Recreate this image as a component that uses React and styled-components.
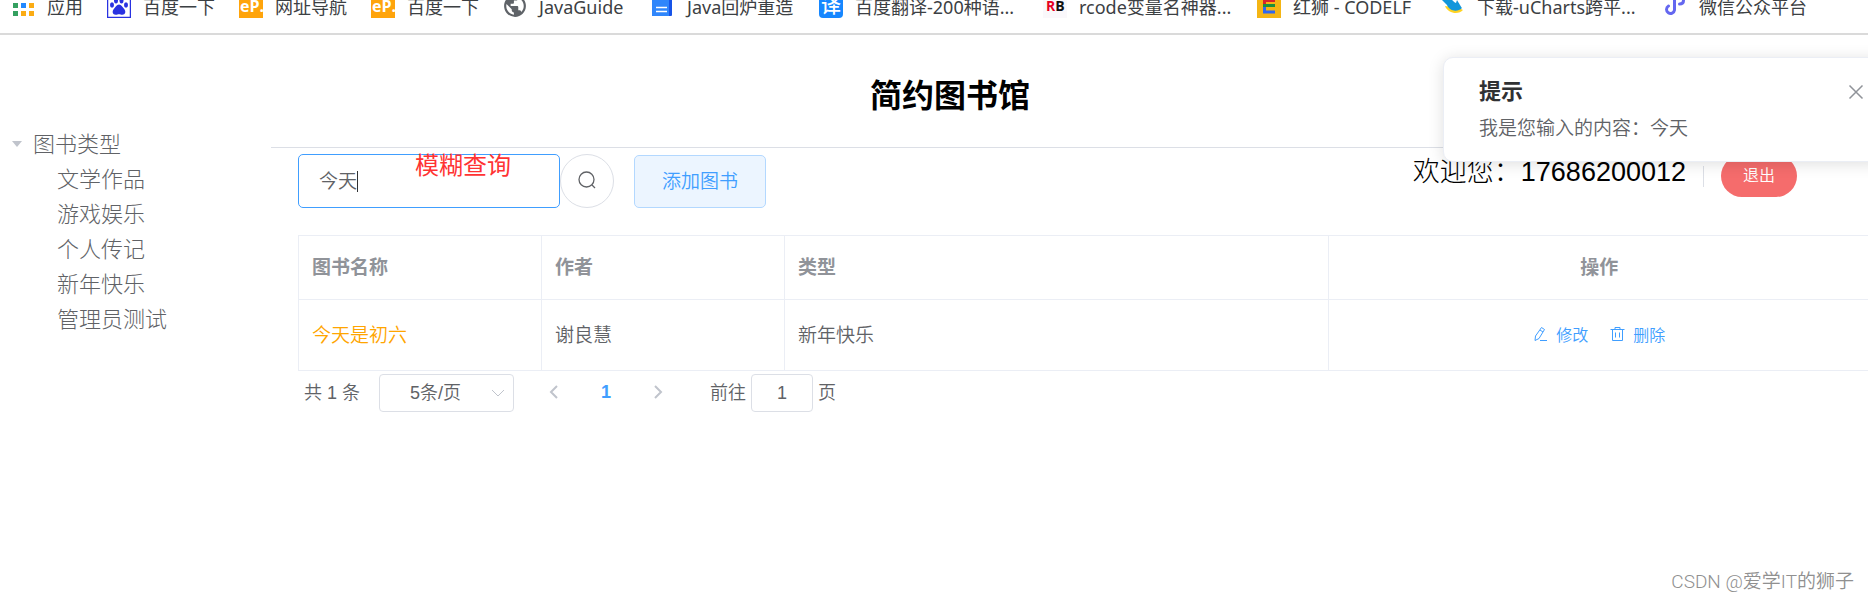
import React, { useState } from 'react';
import styled, { createGlobalStyle } from 'styled-components';

const GlobalStyle = createGlobalStyle`
  * {
    box-sizing: border-box;
  }

  body {
    margin: 0;
    overflow: hidden;
    background: #fff;
    color: #606266;
    font-family: "Liberation Sans", "Noto Sans CJK SC", sans-serif;
    font-weight: 350;
  }

  button, input, select {
    font-family: inherit;
    font-weight: inherit;
  }
`;

const Screen = styled.div`
  position: relative;
  min-height: 100vh;
  overflow: hidden;
`;

const BookmarkBar = styled.nav`
  height: 35px;
  overflow: hidden;
  border-bottom: 2px solid #dadada;
`;

const BookmarkList = styled.ul`
  display: flex;
  gap: 24px;
  margin: -6px 0 0;
  padding: 0 0 0 11px;
  list-style: none;
`;

const Bookmark = styled.a`
  display: flex;
  align-items: center;
  gap: 12px;
  height: 24px;
  color: #3c4043;
  font-family: "Noto Sans", "Noto Sans CJK SC", sans-serif;
  font-size: 18px;
  font-weight: 400;
  line-height: 24px;
  white-space: nowrap;
  text-decoration: none;

  svg {
    flex: none;
  }
`;

const BookmarkLabel = styled.span`
  min-width: ${props => props.$width}px;
  padding-top: 2px;
`;

// The page is a little wider than the window, so its right edge is cut off
const Page = styled.div`
  width: calc(100% + 32px);
`;

const PageTitle = styled.h1`
  margin: 0;
  padding-top: 37px;
  color: #000;
  font-size: 32px;
  font-weight: 700;
  line-height: 48px;
  text-align: center;
`;

const Body = styled.div`
  display: flex;
`;

const Sidebar = styled.aside`
  flex: none;
  width: 271px;
  padding: 4px 0 0 12px;
`;

const TreeList = styled.ul`
  margin: 0;
  padding: 0 0 0 ${props => (props.$nested ? '45px' : '0')};
  list-style: none;
`;

const TreeNode = styled.div`
  display: flex;
  align-items: center;
  gap: 11px;
  height: 35px;
  font-size: 22px;
  font-weight: 300;
`;

const Caret = styled.span`
  margin-top: 4px;
  border: 5px solid transparent;
  border-top: 6px solid #c0c4cc;
  border-bottom: 0;
`;

const Main = styled.main`
  flex: 1;
  margin-top: 27px;
  padding: 6px 28px 0 27px;
  border-top: 1px solid #dcdfe6;
`;

const Toolbar = styled.div`
  display: flex;
  align-items: flex-start;
  margin-bottom: 27px;
`;

const SearchBox = styled.label`
  position: relative;
  width: 262px;
`;

const SearchInput = styled.input`
  display: block;
  width: 100%;
  height: 54px;
  padding: 0 20px 4px;
  border: 1px solid #409eff;
  border-radius: 5px;
  outline: none;
  color: #606266;
  font-size: 19px;
`;

const TextCursor = styled.span`
  position: absolute;
  top: 17px;
  left: 59px;
  width: 1px;
  height: 21px;
  background: #303133;
`;

const Annotation = styled.span`
  position: absolute;
  top: -2px;
  left: 117px;
  color: #ff3333;
  font-size: 24px;
  font-weight: 400;
  line-height: 28px;
`;

const CircleButton = styled.button`
  display: grid;
  place-items: center;
  width: 54px;
  height: 54px;
  padding: 0 0 3px;
  border: 1px solid #dcdfe6;
  border-radius: 50%;
  background: #fff;
  color: #606266;
`;

const AddButton = styled.button`
  width: 132px;
  height: 53px;
  margin: 1px 0 0 20px;
  padding: 0 0 5px;
  border: 1px solid #b3d8ff;
  border-radius: 5px;
  background: #ecf5ff;
  color: #409eff;
  font-size: 19px;
`;

const UserArea = styled.div`
  display: flex;
  align-items: center;
  margin: 1px 75px 0 auto;
  color: #000;
`;

const Welcome = styled.span`
  padding-bottom: 8px;
  font-size: 27px;
  font-weight: 300;
  line-height: 32px;
`;

const Divider = styled.span`
  width: 1px;
  height: 21px;
  margin: 0 17px;
  background: #dcdfe6;
`;

const LogoutButton = styled.button`
  width: 76px;
  height: 42px;
  padding: 0 0 4px;
  border: 0;
  border-radius: 21px;
  background: #f56c6c;
  color: #fff;
  font-size: 16px;
`;

const BookTable = styled.table`
  width: 100%;
  table-layout: fixed;
  border-collapse: collapse;
  font-size: 19px;

  th, td {
    padding: 0 14px 4px 13px;
    border: 1px solid #ebeef5;
    text-align: left;
  }

  th {
    height: 64px;
    color: #909399;
    font-weight: 700;
  }

  td {
    height: 71px;
  }

  th:last-child, td:last-child {
    text-align: center;
  }
`;

const Col = styled.col`
  width: ${props => (props.$narrow ? '243px' : 'auto')};
`;

const BookLink = styled.a`
  color: #ffa500;
  text-decoration: none;
`;

const Actions = styled.div`
  display: flex;
  justify-content: center;
  gap: 22px;
  padding-top: 2px;
`;

const TextButton = styled.button`
  display: flex;
  align-items: center;
  gap: 8px;
  padding: 0;
  border: 0;
  background: none;
  color: #409eff;
  font-size: 16px;
`;

const Pagination = styled.div`
  display: flex;
  align-items: center;
  height: 38px;
  margin-top: 3px;
  padding-left: 6px;
  font-size: 18px;
`;

const PageText = styled.span`
  padding-bottom: 4px;
`;

const SizePicker = styled.div`
  position: relative;
  width: 135px;
  margin: 0 22px 0 19px;

  svg {
    position: absolute;
    top: 12px;
    right: 9px;
    pointer-events: none;
  }
`;

const SizeSelect = styled.select`
  appearance: none;
  width: 100%;
  height: 38px;
  padding: 0 30px;
  border: 1px solid #dcdfe6;
  border-radius: 4px;
  background: #fff;
  color: #606266;
  font-size: 18px;
`;

const PageButton = styled.button`
  display: grid;
  place-items: center;
  width: 36px;
  height: 38px;
  padding: 0 0 2px;
  border: 0;
  background: none;
  color: ${props => (props.$current ? '#409eff' : '#c0c4cc')};
  font-size: 18px;
  font-weight: 700;
`;

const Pager = styled.div`
  display: flex;
  gap: 16px;
`;

const Jumper = styled.label`
  display: flex;
  align-items: center;
  gap: 5px;
  margin-left: 34px;
`;

const JumperInput = styled.input`
  width: 62px;
  height: 38px;
  padding: 0;
  border: 1px solid #dcdfe6;
  border-radius: 4px;
  color: #606266;
  font-size: 18px;
  text-align: center;
`;

const Notification = styled.div`
  position: absolute;
  top: 57px;
  right: -16px;
  width: 441px;
  padding: 20px 35px 18px;
  border: 1px solid #ebeef5;
  border-radius: 10px;
  background: #fff;
  box-shadow: 0 2px 16px rgba(0, 0, 0, 0.13);
`;

const NotificationTitle = styled.h2`
  margin: 0;
  color: #303133;
  font-size: 22px;
  font-weight: 700;
  line-height: 28px;
`;

const NotificationText = styled.p`
  margin: 9px 0 0;
  font-size: 19px;
  line-height: 28px;
`;

const CloseButton = styled.button`
  position: absolute;
  top: 26px;
  right: 19px;
  display: flex;
  padding: 0;
  border: 0;
  background: none;
`;

const Watermark = styled.div`
  position: absolute;
  right: 14px;
  bottom: 5px;
  color: #909090;
  font-family: Roboto, "Noto Sans CJK SC", sans-serif;
  font-size: 19px;
  line-height: 28px;
`;

const AppsIcon = () => (
  <svg width="24" height="24" viewBox="0 0 24 24">
    {['#ea4335', '#ea4335', '#ea4335', '#34a060', '#2288ff', '#fbac14', '#34a060', '#fbac14', '#fbac14'].map((color, i) => (
      <rect key={i} x={2 + (i % 3) * 8} y={1 + Math.floor(i / 3) * 8} width="5" height="5" fill={color} />
    ))}
  </svg>
);

const PawIcon = () => (
  <svg width="24" height="24" viewBox="0 0 24 24">
    <rect x="0.500" y="0.500" width="23" height="23" fill="#fff" stroke="#2932e1" strokeWidth="1.500" />
    <g fill="#2932e1">
      <ellipse cx="9" cy="6.500" rx="2" ry="3" />
      <ellipse cx="14.500" cy="6.500" rx="2" ry="3" />
      <ellipse cx="5" cy="11" rx="2" ry="2.700" />
      <ellipse cx="19" cy="11" rx="2" ry="2.700" />
      <path d="M12 10.500c2.500 0 3.200 2.300 5 4.200 2.300 2.400 1.500 6-1.700 6-1.500 0-2-.5-3.300-.5s-1.800.5-3.300.5c-3.200 0-4-3.600-1.700-6 1.800-1.900 2.500-4.200 5-4.200z" />
    </g>
  </svg>
);

const EpIcon = () => (
  <svg width="24" height="24" viewBox="0 0 24 24">
    <rect width="24" height="24" fill="#ffa40b" />
    <text x="1" y="18" fill="#fff" fontFamily="Open Sans" fontSize="16" fontWeight="700">eP.</text>
  </svg>
);

const GlobeIcon = () => (
  <svg width="24" height="24" viewBox="1 1 22 22" fill="#5f6368">
    <path d="M12 2C6.480 2 2 6.480 2 12s4.480 10 10 10 10-4.480 10-10S17.520 2 12 2zm-1 17.930c-3.950-.490-7-3.850-7-7.930 0-.620.080-1.210.210-1.790L9 15v1c0 1.100.900 2 2 2v1.930zm6.900-2.540c-.260-.810-1-1.390-1.900-1.390h-1v-3c0-.550-.450-1-1-1H8v-2h2c.550 0 1-.450 1-1V7h2c1.100 0 2-.900 2-2v-.410c2.930 1.190 5 4.060 5 7.410 0 2.080-.800 3.970-2.100 5.390z" />
  </svg>
);

const DocIcon = () => (
  <svg width="24" height="24" viewBox="0 0 24 24">
    <rect x="1" y="2" width="20" height="20" rx="1" fill="#1754e8" />
    <rect x="1" y="2" width="17" height="20" fill="#2f86fb" />
    <path d="M5 13.500h11M5 17.500h11" stroke="#fff" strokeWidth="1.500" />
  </svg>
);

const TranslateIcon = () => (
  <svg width="24" height="24" viewBox="0 0 24 24">
    <rect width="24" height="24" rx="4" fill="#1687ff" />
    <text x="2" y="19" fill="#fff" fontFamily="Noto Sans CJK SC" fontSize="20" fontWeight="500">译</text>
  </svg>
);

const RbIcon = () => (
  <svg width="24" height="24" viewBox="0 0 24 24">
    <rect width="24" height="24" fill="#faf8fb" />
    <text x="3" y="17" fontFamily="Open Sans" fontSize="14" fontWeight="700" fill="#e60023">
      R<tspan fill="#111">B</tspan>
    </text>
  </svg>
);

const CodelfIcon = () => (
  <svg width="24" height="24" viewBox="0 0 24 24">
    <rect width="24" height="24" fill="#f4b514" />
    <path d="M18 6.500H7.500V10" fill="none" stroke="#d8232a" strokeWidth="3" />
    <path d="M7.500 15v-3.500H18" fill="none" stroke="#1c8f3c" strokeWidth="3" />
    <path d="M7.500 13v5H18" fill="none" stroke="#2f67ee" strokeWidth="3" />
  </svg>
);

const BirdIcon = () => (
  <svg width="24" height="24" viewBox="0 0 24 24">
    <path d="M4 12c3 8 14 9 18 4l-4-2z" fill="#ffd321" />
    <path d="M1 6h6c3-3 5 2 8 3l1-3c2 3 4 7 5 8-4 4-12 4-15-3z" fill="#1296db" />
  </svg>
);

const NoteIcon = () => (
  <svg width="24" height="24" viewBox="0 0 24 24">
    <path d="M5.500 12a4 4 0 1 0 6 4V6.500a4.500 4.500 0 1 1 9 0c0 2-1.500 3.500-4 3.500" fill="none" stroke="#6467f0" strokeWidth="3" strokeLinecap="round" />
  </svg>
);

const SearchIcon = () => (
  <svg width="18" height="18" viewBox="0 0 18 18" fill="none" stroke="currentColor" strokeWidth="1.300">
    <circle cx="8.500" cy="8.500" r="7.500" />
    <path d="M14 14l3 3" />
  </svg>
);

const EditIcon = () => (
  <svg width="15" height="16" viewBox="0 0 15 16" fill="none" stroke="currentColor">
    <path d="M8.500 1.500l3 2-5.500 9-4 2 .500-4.500zM7 4l3 2M7 14.500h7" />
  </svg>
);

const TrashIcon = () => (
  <svg width="15" height="16" viewBox="0 0 15 16" fill="none" stroke="currentColor">
    <path d="M.5 3.500h14M5 3.500v-2h5v2M2.500 3.500v11h10v-11M5.500 6.500v5M9.500 6.500v5" />
  </svg>
);

const Chevron = ({ points, width = 2 }) => (
  <svg width="14" height="14" viewBox="0 0 14 14" fill="none" stroke="#c0c4cc" strokeWidth={width}>
    <polyline points={points} />
  </svg>
);

const CloseIcon = () => (
  <svg width="16" height="16" viewBox="0 0 16 16" stroke="#909399" strokeWidth="1.500">
    <path d="M1.500 1.500l13 13M14.500 1.500l-13 13" />
  </svg>
);

const bookmarks = [
  { label: '应用', width: 36, icon: AppsIcon },
  { label: '百度一下', width: 72, icon: PawIcon },
  { label: '网址导航', width: 72, icon: EpIcon },
  { label: '百度一下', width: 72, icon: EpIcon },
  { label: 'JavaGuide', width: 88, icon: GlobeIcon },
  { label: 'Java回炉重造', width: 108, icon: DocIcon },
  { label: '百度翻译-200种语...', width: 164, icon: TranslateIcon },
  { label: 'rcode变量名神器...', width: 154, icon: RbIcon },
  { label: '红狮 - CODELF', width: 124, icon: CodelfIcon },
  { label: '下载-uCharts跨平...', width: 162, icon: BirdIcon },
  { label: '微信公众平台', width: 108, icon: NoteIcon },
];

const categories = ['文学作品', '游戏娱乐', '个人传记', '新年快乐', '管理员测试'];

const books = [{ id: 1, name: '今天是初六', author: '谢良慧', type: '新年快乐' }];

function App() {
  const [keyword, setKeyword] = useState('今天');
  const [page, setPage] = useState('1');
  const [showNotice, setShowNotice] = useState(true);

  return (
    <Screen>
      <GlobalStyle />

      <BookmarkBar>
        <BookmarkList>
          {bookmarks.map(({ label, width, icon: Icon }, index) => (
            <li key={index}>
              <Bookmark href="#">
                <Icon />
                <BookmarkLabel $width={width}>{label}</BookmarkLabel>
              </Bookmark>
            </li>
          ))}
        </BookmarkList>
      </BookmarkBar>

      <Page>
        <PageTitle>简约图书馆</PageTitle>
        <Body>
          <Sidebar>
            <TreeList>
              <li>
                <TreeNode>
                  <Caret />
                  图书类型
                </TreeNode>
                <TreeList $nested>
                  {categories.map(name => (
                    <li key={name}>
                      <TreeNode>{name}</TreeNode>
                    </li>
                  ))}
                </TreeList>
              </li>
            </TreeList>
          </Sidebar>

          <Main>
            <Toolbar>
              <SearchBox>
                <SearchInput
                  aria-label="图书名称"
                  value={keyword}
                  onChange={e => setKeyword(e.target.value)}
                />
                <TextCursor />
                <Annotation>模糊查询</Annotation>
              </SearchBox>
              <CircleButton aria-label="查询" onClick={() => setShowNotice(true)}>
                <SearchIcon />
              </CircleButton>
              <AddButton>添加图书</AddButton>
              <UserArea>
                <Welcome>欢迎您：17686200012</Welcome>
                <Divider />
                <LogoutButton>退出</LogoutButton>
              </UserArea>
            </Toolbar>

            <BookTable>
              <colgroup>
                <Col $narrow />
                <Col $narrow />
                <Col />
                <Col />
              </colgroup>
              <thead>
                <tr>
                  <th>图书名称</th>
                  <th>作者</th>
                  <th>类型</th>
                  <th>操作</th>
                </tr>
              </thead>
              <tbody>
                {books.map(book => (
                  <tr key={book.id}>
                    <td><BookLink href="#">{book.name}</BookLink></td>
                    <td>{book.author}</td>
                    <td>{book.type}</td>
                    <td>
                      <Actions>
                        <TextButton><EditIcon />修改</TextButton>
                        <TextButton><TrashIcon />删除</TextButton>
                      </Actions>
                    </td>
                  </tr>
                ))}
              </tbody>
            </BookTable>

            <Pagination>
              <PageText>共 1 条</PageText>
              <SizePicker>
                <SizeSelect aria-label="每页条数" defaultValue="5">
                  <option value="5">5条/页</option>
                  <option value="10">10条/页</option>
                </SizeSelect>
                <Chevron points="1,4 7,10 13,4" width={1} />
              </SizePicker>
              <Pager>
                <PageButton aria-label="上一页"><Chevron points="10,1 4,7 10,13" /></PageButton>
                <PageButton $current>1</PageButton>
                <PageButton aria-label="下一页"><Chevron points="4,1 10,7 4,13" /></PageButton>
              </Pager>
              <Jumper>
                <PageText>前往</PageText>
                <JumperInput value={page} onChange={e => setPage(e.target.value)} />
                <PageText>页</PageText>
              </Jumper>
            </Pagination>
          </Main>
        </Body>
      </Page>

      {showNotice && (
        <Notification role="alert">
          <NotificationTitle>提示</NotificationTitle>
          <NotificationText>我是您输入的内容：今天</NotificationText>
          <CloseButton aria-label="关闭" onClick={() => setShowNotice(false)}>
            <CloseIcon />
          </CloseButton>
        </Notification>
      )}

      <Watermark>CSDN @爱学IT的狮子</Watermark>
    </Screen>
  );
}

export default App;
